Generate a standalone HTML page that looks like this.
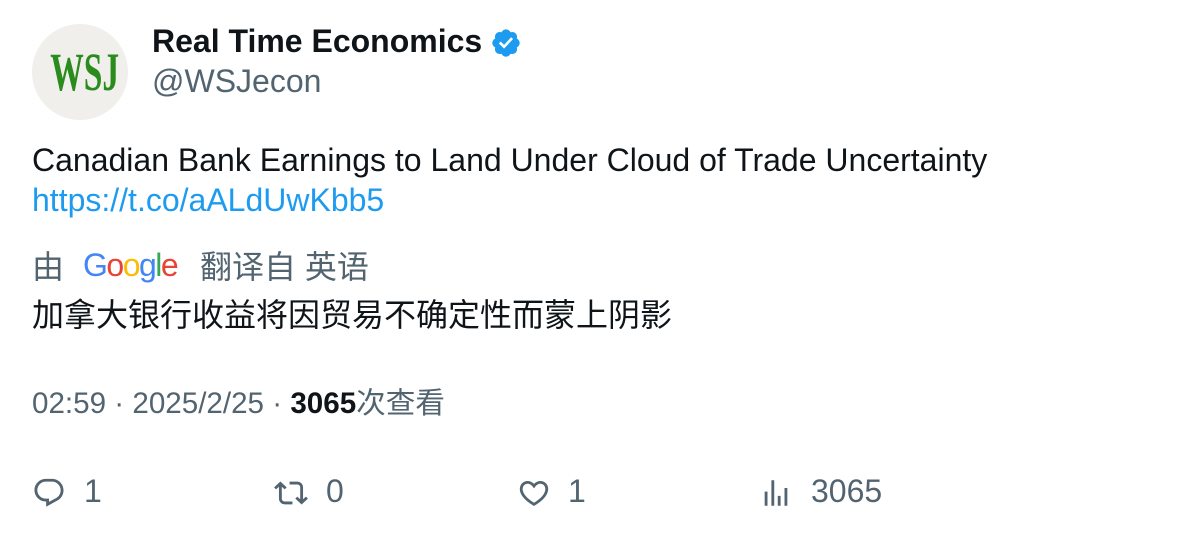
<!DOCTYPE html>
<html><head><meta charset="utf-8"><style>
body{margin:0;background:#fff;width:1196px;height:538px;overflow:hidden;font-family:"Liberation Sans","Noto Sans CJK SC",sans-serif;color:#0f1419;position:relative}
.a{position:absolute;white-space:nowrap}
.g{color:#536471}
</style></head><body>
<div class="a" style="left:32px;top:24px;width:96px;height:96px;border-radius:50%;background:#f0efeb"></div>
<div class="a" style="left:32px;top:42px;width:96px;text-align:center;font-family:'Liberation Serif',serif;font-weight:bold;font-size:54px;color:#2a8c1c;transform:scaleX(0.62);line-height:60px">WSJ</div>
<div class="a" style="left:152px;top:21px;font-size:32px;font-weight:bold;line-height:40px">Real Time Economics</div>
<svg class="a" style="left:490px;top:27px" width="32" height="32" viewBox="0 0 24 24"><path fill="#1d9bf0" d="M22.25 12c0-1.43-.88-2.67-2.19-3.34.46-1.39.2-2.9-.81-3.910s-2.52-1.27-3.91-.81c-.66-1.31-1.910-2.19-3.34-2.19s-2.67.88-3.33 2.19c-1.4-.46-2.91-.2-3.92.81s-1.26 2.52-.8 3.91c-1.31.67-2.2 1.91-2.2 3.34s.89 2.67 2.2 3.34c-.46 1.39-.21 2.9.8 3.91s2.52 1.26 3.91.81c.67 1.31 1.91 2.19 3.34 2.19s2.68-.88 3.34-2.19c1.39.45 2.9.2 3.91-.81s1.27-2.52.81-3.91c1.31-.67 2.19-1.91 2.19-3.34z"/><path fill="#fff" d="M10.54 16.2l-3.9-3.9 1.41-1.41 2.49 2.49 5.3-5.73 1.47 1.36z"/></svg>
<div class="a g" style="left:152px;top:61px;font-size:32px;line-height:40px">@WSJecon</div>
<div class="a" style="left:32px;top:140px;font-size:32px;line-height:40px">Canadian Bank Earnings to Land Under Cloud of Trade Uncertainty</div>
<div class="a" style="left:32px;top:180px;font-size:32px;line-height:40px;color:#1d9bf0">https://t.co/aALdUwKbb5</div>
<div class="a g" style="left:32px;top:247px;font-size:32px;line-height:40px">由</div>
<div class="a" style="left:83px;top:245px;font-size:32px;line-height:40px;letter-spacing:-1.5px"><span style="color:#4285f4">G</span><span style="color:#ea4335">o</span><span style="color:#fbbc05">o</span><span style="color:#4285f4">g</span><span style="color:#34a853">l</span><span style="color:#ea4335">e</span></div>
<div class="a g" style="left:200px;top:247px;font-size:32px;line-height:40px">翻译自 英语</div>
<div class="a" style="left:32px;top:295px;font-size:32px;line-height:40px">加拿大银行收益将因贸易不确定性而蒙上阴影</div>
<div class="a g" style="left:32px;top:384px;font-size:29.6px;line-height:40px">02:59 · 2025/2/25 · <b style="color:#0f1419">3065</b>次查看</div>
<svg class="a" style="left:32px;top:476px" width="34" height="34" viewBox="0 0 24 24"><path fill="#536471" d="M1.751 10c0-4.42 3.584-8 8.005-8h4.366c4.49 0 8.129 3.64 8.129 8.130 0 2.96-1.607 5.68-4.196 7.11l-8.054 4.46v-3.69h-.067c-4.49.1-8.183-3.51-8.183-8.01zm8.005-6c-3.317 0-6.005 2.69-6.005 6 0 3.37 2.77 6.080 6.138 6.01l.351-.01h1.761v2.3l5.087-2.81c1.951-1.080 3.163-3.130 3.163-5.360 0-3.390-2.744-6.130-6.129-6.130H9.756z"/></svg>
<div class="a g" style="left:84px;top:471px;font-size:32px;line-height:40px">1</div>
<svg class="a" style="left:274px;top:476px" width="34" height="34" viewBox="0 0 24 24"><path fill="#536471" d="M4.5 3.88l4.432 4.14-1.364 1.46L5.5 7.55V16c0 1.1.896 2 2 2H13v2H7.5c-2.209 0-4-1.79-4-4V7.55L1.432 9.48.068 8.02 4.5 3.88zM16.5 6H11V4h5.5c2.209 0 4 1.79 4 4v8.45l2.068-1.93 1.364 1.46-4.432 4.14-4.432-4.14 1.364-1.46 2.068 1.93V8c0-1.1-.896-2-2-2z"/></svg>
<div class="a g" style="left:326px;top:471px;font-size:32px;line-height:40px">0</div>
<svg class="a" style="left:517px;top:476px" width="34" height="34" viewBox="0 0 24 24"><path fill="#536471" d="M16.697 5.5c-1.222-.06-2.679.51-3.890 2.160l-.805 1.090-.806-1.090C9.984 6.010 8.526 5.440 7.304 5.500c-1.243.07-2.349.78-2.910 1.910-.552 1.120-.633 2.780.479 4.820 1.074 1.970 3.257 4.270 7.129 6.610 3.870-2.340 6.052-4.640 7.126-6.610 1.111-2.040 1.030-3.700.477-4.820-.561-1.130-1.666-1.840-2.908-1.910zm4.187 7.690c-1.351 2.480-4.001 5.120-8.379 7.670l-.503.300-.504-.300c-4.379-2.550-7.029-5.190-8.382-7.670-1.360-2.500-1.410-4.860-.514-6.670.887-1.790 2.647-2.910 4.601-3.010 1.651-.090 3.368.560 4.798 2.010 1.429-1.450 3.146-2.100 4.796-2.010 1.954.100 3.714 1.220 4.601 3.010.896 1.810.846 4.170-.514 6.670z"/></svg>
<div class="a g" style="left:568px;top:471px;font-size:32px;line-height:40px">1</div>
<svg class="a" style="left:759px;top:476px" width="34" height="34" viewBox="0 0 24 24"><path fill="#536471" d="M8.75 21V3h2v18h-2zM18 21V8.5h2V21h-2zM4 21l.004-10h2L6 21H4zm9.248 0v-7h2v7h-2z"/></svg>
<div class="a g" style="left:811px;top:471px;font-size:32px;line-height:40px">3065</div>
</body></html>
